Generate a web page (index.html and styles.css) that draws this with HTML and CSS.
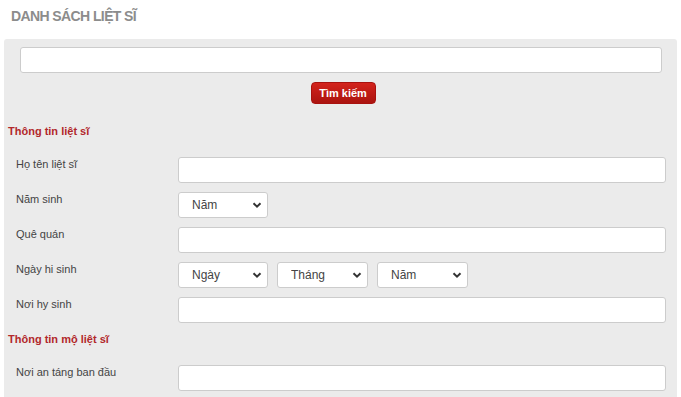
FILE: index.html
```html
<!DOCTYPE html>
<html lang="vi">
<head>
<meta charset="UTF-8">
<meta name="viewport" content="width=device-width, initial-scale=1.0">
<title>Danh sách liệt sĩ</title>
<link rel="stylesheet" href="styles.css">
</head>
<body>

<h2 class="title">DANH SÁCH LIỆT SĨ</h2>

<div class="panel">
	<div class="search">
		<input type="text" class="txt">
	</div>
	<div class="btn-wrap">
		<button class="btn">Tìm kiếm</button>
	</div>

	<div class="sec">Thông tin liệt sĩ</div>
	<div class="row">
		<label>Họ tên liệt sĩ</label>
		<input type="text" class="txt">
	</div>
	<div class="row">
		<label>Năm sinh</label>
		<div class="sel"><select><option>Năm</option></select><svg viewBox="0 0 10 10"><path d="M1.5 3.2 L5 6.7 L8.5 3.2"/></svg></div>
	</div>
	<div class="row">
		<label>Quê quán</label>
		<input type="text" class="txt">
	</div>
	<div class="row">
		<label>Ngày hi sinh</label>
		<div class="sels">
			<div class="sel"><select><option>Ngày</option></select><svg viewBox="0 0 10 10"><path d="M1.5 3.2 L5 6.7 L8.5 3.2"/></svg></div>
			<div class="sel"><select><option>Tháng</option></select><svg viewBox="0 0 10 10"><path d="M1.5 3.2 L5 6.7 L8.5 3.2"/></svg></div>
			<div class="sel"><select><option>Năm</option></select><svg viewBox="0 0 10 10"><path d="M1.5 3.2 L5 6.7 L8.5 3.2"/></svg></div>
		</div>
	</div>
	<div class="row">
		<label>Nơi hy sinh</label>
		<input type="text" class="txt">
	</div>

	<div class="sec">Thông tin mộ liệt sĩ</div>
	<div class="row">
		<label>Nơi an táng ban đầu</label>
		<input type="text" class="txt">
	</div>
</div>

</body>
</html>
```

FILE: styles.css
```css
* {
	margin: 0;
	padding: 0;
	box-sizing: border-box;
}
body {
	margin: 0 4px;
	font-family: "Liberation Sans", Arial, sans-serif;
	color: #333;
	background: #fff;
}
.title {
	margin: 8px 0 15px 7px;
	font-size: 14px;
	line-height: 16px;
	font-weight: bold;
	letter-spacing: -0.6px;
	color: #8c8c8c;
}
.panel {
	background: #ebebeb;
	border-radius: 3px 3px 0 0;
	padding: 8px 11px 0 4px;
	height: 358px;
	overflow: hidden;
}
.search {
	padding: 0 4px 0 12px;
}
.txt {
	display: block;
	width: 100%;
	height: 26px;
	border: 1px solid #ccc;
	border-radius: 3px;
	background: #fff;
	outline: none;
}
.btn-wrap {
	display: flex;
	justify-content: center;
	padding-left: 12px;
	margin: 9px 0 20px;
}
.btn {
	width: 65px;
	height: 22px;
	border: 1px solid #a8120f;
	border-radius: 4px;
	background: linear-gradient(#d3231c, #ab1410);
	color: #fff;
	font: bold 11px "Liberation Sans", Arial, sans-serif;
}
.sec {
	font-size: 11px;
	line-height: 14px;
	font-weight: bold;
	color: #b2282b;
	margin-bottom: 19px;
}
.row {
	display: flex;
	align-items: flex-start;
	margin-bottom: 9px;
}
.row label {
	width: 170px;
	flex: none;
	padding-left: 8px;
	font-size: 11px;
	line-height: 14px;
	color: #444;
}
.sels {
	display: flex;
	gap: 9px;
}
.sel {
	position: relative;
	width: 90px;
	height: 26px;
}
.sels .sel + .sel {
	width: 91px;
}
.sel select {
	appearance: none;
	width: 100%;
	height: 100%;
	border: 1px solid #ccc;
	border-radius: 3px;
	background: #fff;
	padding-left: 13px;
	font: 12px "Liberation Sans", Arial, sans-serif;
	color: #444;
	outline: none;
}
.sel svg {
	position: absolute;
	right: 6px;
	top: 8px;
	width: 10px;
	height: 10px;
	fill: none;
	stroke: #333;
	stroke-width: 2;
	pointer-events: none;
}
```
